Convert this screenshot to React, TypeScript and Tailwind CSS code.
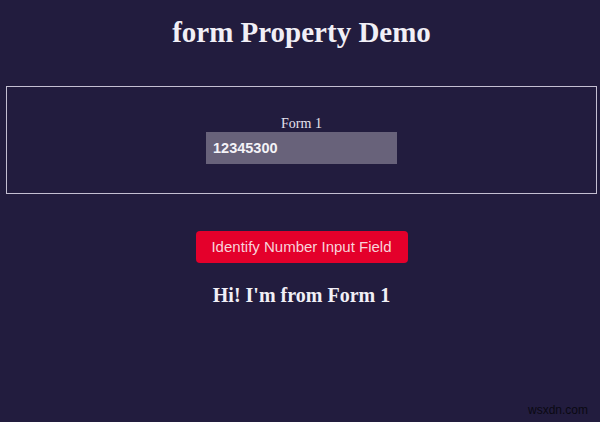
export default function App() {
  return (
    <div className="relative h-[422px] overflow-hidden bg-[#221c3e] pl-[6px] pr-[3px] font-['Liberation_Serif',serif]">
      <h1 className="pt-[18px] text-center text-[29px] font-bold leading-[29px] text-[#f1eff6]">
        form Property Demo
      </h1>

      <div className="mt-[39px] flex flex-col items-center border border-[#c4bfd2] pt-[29px] pb-[29px]">
        <label className="text-[14px] leading-[16px] text-[#e6e3ee]">Form 1</label>
        <input
          type="number"
          defaultValue={12345300}
          className="h-[32px] w-[191px] bg-[#68627a] px-[7px] font-['Liberation_Sans',sans-serif] text-[14.5px] font-bold text-[#f4f3f7] outline-none [appearance:textfield]"
        />
      </div>

      <div className="mt-[37px] flex flex-col items-center">
        <button className="h-[32px] w-[212px] rounded-[4px] bg-[#e4002b] font-['Liberation_Sans',sans-serif] text-[15px] text-[#f8d3da]">
          Identify Number Input Field
        </button>
        <h2 className="mt-[20px] text-[20px] font-bold leading-[24px] text-[#f1eff6]">
          Hi! I'm from Form 1
        </h2>
      </div>

      <span className="absolute right-[12px] bottom-[3px] font-['Liberation_Sans',sans-serif] text-[12px] text-[#0a0912]">
        wsxdn.com
      </span>
    </div>
  )
}
